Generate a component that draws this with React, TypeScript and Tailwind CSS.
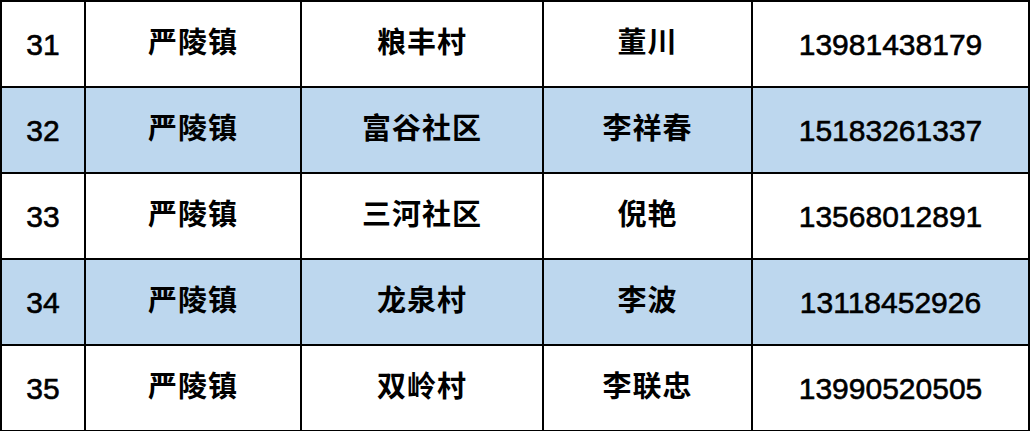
const rows = [
  { no: "31", town: "严陵镇", village: "粮丰村", name: "董川", phone: "13981438179" },
  { no: "32", town: "严陵镇", village: "富谷社区", name: "李祥春", phone: "15183261337" },
  { no: "33", town: "严陵镇", village: "三河社区", name: "倪艳", phone: "13568012891" },
  { no: "34", town: "严陵镇", village: "龙泉村", name: "李波", phone: "13118452926" },
  { no: "35", town: "严陵镇", village: "双岭村", name: "李联忠", phone: "13990520505" },
];

const cell = "flex items-center justify-center border-r-2 border-b-2 border-black";
const cjk = "font-bold text-[29px] tracking-[1px]";
const num = "text-[30px] [-webkit-text-stroke:0.6px_black]";

export default function App() {
  return (
    <div
      className="w-[1031px] h-[431px] bg-white"
      style={{ fontFamily: '"Liberation Sans", "Noto Sans CJK SC", sans-serif' }}
    >
      <div className="w-[1030px] border-l-2 border-t-2 border-black grid grid-cols-[84px_216px_242px_209px_277px] text-black">
        {rows.map((r, i) => {
          const bg = i % 2 === 1 ? "bg-[#bdd7ee]" : "bg-white";
          return (
            <div key={r.no} className="contents">
              <div className={`${cell} ${bg} ${num} h-[86px]`}>{r.no}</div>
              <div className={`${cell} ${bg} ${cjk} h-[86px]`}>{r.town}</div>
              <div className={`${cell} ${bg} ${cjk} h-[86px]`}>{r.village}</div>
              <div className={`${cell} ${bg} ${cjk} h-[86px]`}>{r.name}</div>
              <div className={`${cell} ${bg} ${num} h-[86px]`}>{r.phone}</div>
            </div>
          );
        })}
      </div>
    </div>
  );
}
